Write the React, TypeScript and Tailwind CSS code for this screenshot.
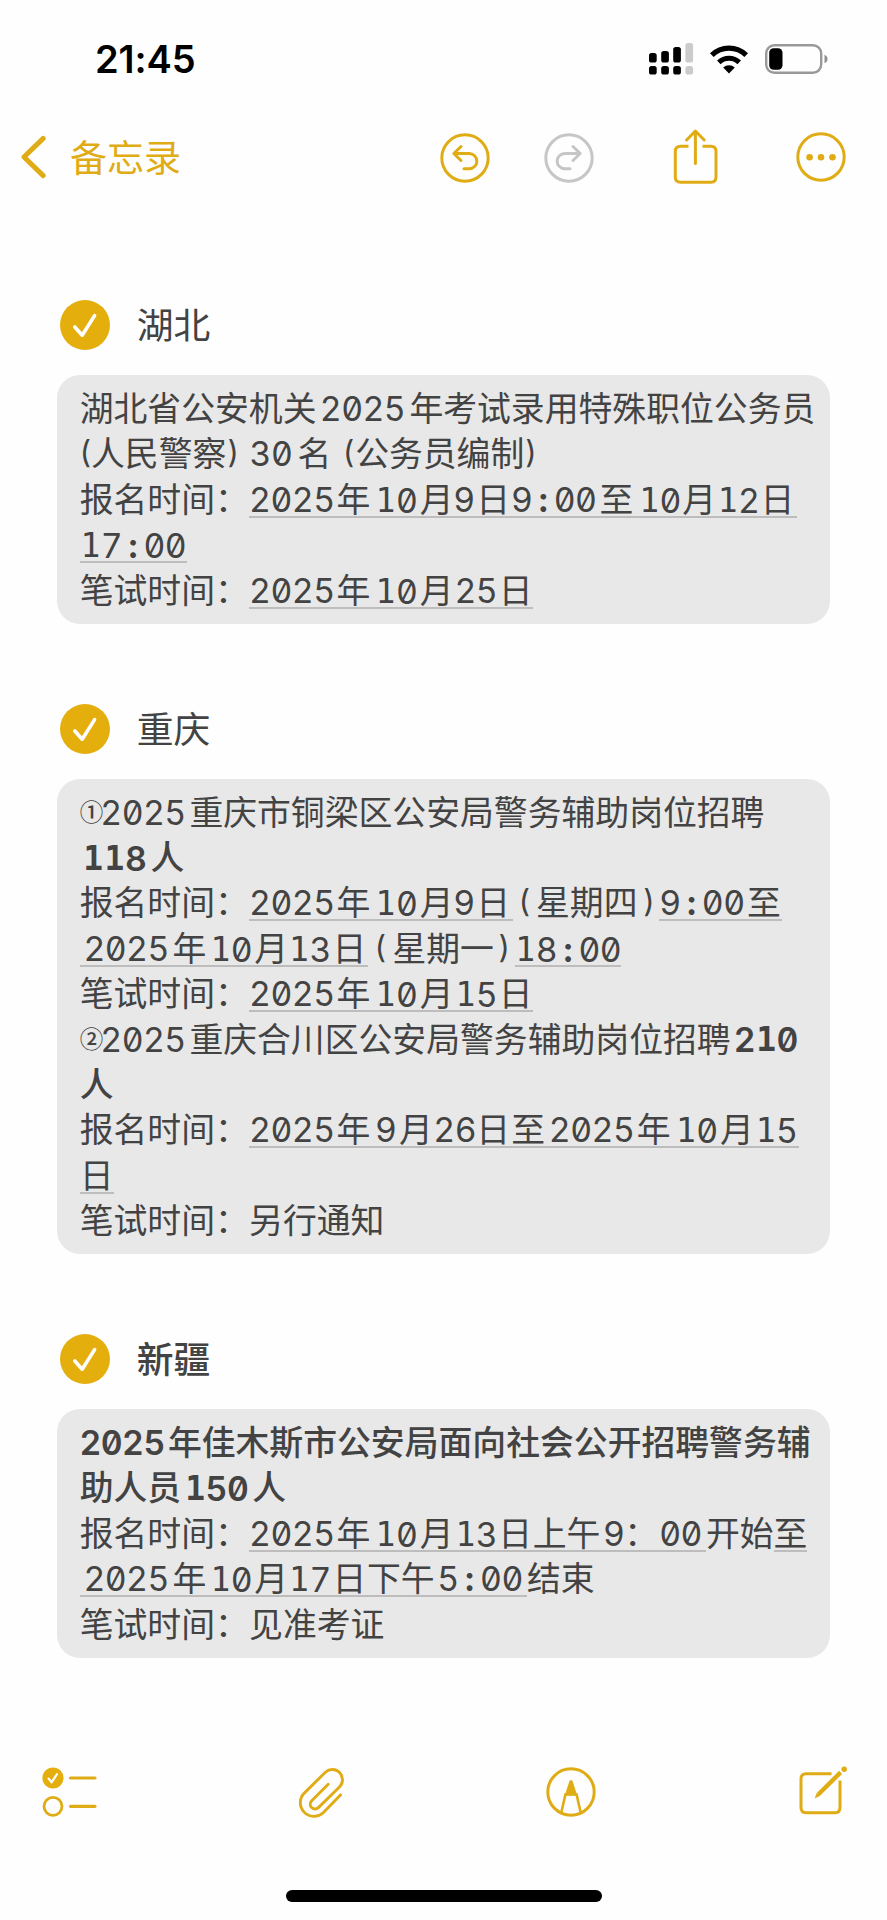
import clsx from 'clsx'

type Mark = '' | 'u' | 'b'

// text, left offset in the line (px), u = detected date underline, b = bold
type Run = [string, number, Mark?]

interface NoteLine {
  runs: Run[]
  end: number
}

interface NoteSection {
  title: string
  bold?: boolean
  lines: NoteLine[]
}

const APPLY: Run = ['报名时间：', 0]
const EXAM: Run = ['笔试时间：', 0]

const sections: NoteSection[] = [
  {
    title: '湖北',
    lines: [
      { runs: [['湖北省公安机关', 0], ['2025', 240.4], ['年考试录用特殊职位公务员', 329.7]], end: 736 },
      {
        runs: [
          ['(', 0], ['人民警察', 11.3], [')', 147.5], ['', 159.5], ['30', 170.2], ['名', 217.8], ['(', 262.5],
          ['公务员编制', 275.5], [')', 445.7],
        ],
        end: 457,
      },
      {
        runs: [
          APPLY, ['2025', 169.7, 'u'], ['年', 256.8, 'u'], ['10', 295.2, 'u'], ['月', 340.2, 'u'], ['9', 373.9, 'u'],
          ['日', 396.5, 'u'], ['9:00', 431.6, 'u'], ['至', 519.8, 'u'], ['10', 558.8, 'u'], ['月', 602.7, 'u'],
          ['12', 637.4, 'u'], ['日', 681, 'u'],
        ],
        end: 717.8,
      },
      { runs: [['17:00', 0, 'u']], end: 107 },
      {
        runs: [EXAM, ['2025', 169.7, 'u'], ['年', 256.8, 'u'], ['10', 295.2, 'u'], ['月', 340.2, 'u'], ['25', 375, 'u'], ['日', 419, 'u']],
        end: 453.6,
      },
    ],
  },
  {
    title: '重庆',
    lines: [
      { runs: [['①', 0], ['2025', 20.9], ['重庆市铜梁区公安局警务辅助岗位招聘', 109.7]], end: 686 },
      { runs: [['118', 2.8, 'b'], ['人', 70.7, 'b']], end: 105 },
      {
        runs: [
          APPLY, ['2025', 169.7, 'u'], ['年', 256.8, 'u'], ['10', 295.2, 'u'], ['月', 340.2, 'u'], ['9', 373.9, 'u'],
          ['日', 396.5, 'u'], ['(', 433.3], ['星期四', 456.4], [')', 558.8], ['9:00', 579.8, 'u'], ['至', 667.4, 'u'],
        ],
        end: 701.9,
      },
      {
        runs: [
          ['', 0, 'u'], ['2025', 4, 'u'], ['年', 92.8, 'u'], ['10', 130, 'u'], ['月', 174.5, 'u'], ['13', 208.7, 'u'],
          ['日', 252.8, 'u'], ['(', 288.5], ['星期一', 312.8], [')', 414], ['18:00', 435, 'u'],
        ],
        end: 541.3,
      },
      {
        runs: [EXAM, ['2025', 169.7, 'u'], ['年', 256.8, 'u'], ['10', 295.2, 'u'], ['月', 340.2, 'u'], ['15', 375, 'u'], ['日', 419, 'u']],
        end: 453.6,
      },
      { runs: [['②', 0], ['2025', 20.9], ['重庆合川区公安局警务辅助岗位招聘', 109.7], ['210', 654.4, 'b']], end: 719 },
      { runs: [['人', 0, 'b']], end: 34 },
      {
        runs: [
          APPLY, ['2025', 169.7, 'u'], ['年', 256.8, 'u'], ['9', 295.7, 'u'], ['月', 319.3, 'u'], ['26', 354, 'u'],
          ['日', 396.5, 'u'], ['至', 431.6, 'u'], ['2025', 469.5, 'u'], ['年', 557.1, 'u'], ['10', 595.6, 'u'],
          ['月', 640.4, 'u'], ['15', 675.3, 'u'],
        ],
        end: 719.5,
      },
      { runs: [['日', 0, 'u']], end: 34 },
      { runs: [EXAM, ['另行通知', 169.4]], end: 306 },
    ],
  },
  {
    title: '新疆',
    bold: true,
    lines: [
      { runs: [['2025', 0, 'b'], ['年佳木斯市公安局面向社会公开招聘警务辅', 88.2, 'b']], end: 732 },
      { runs: [['助人员', 0, 'b'], ['150', 104.8, 'b'], ['人', 172.5, 'b']], end: 207 },
      {
        runs: [
          APPLY, ['2025', 169.7, 'u'], ['年', 256.8, 'u'], ['10', 295.2, 'u'], ['月', 340.2, 'u'], ['13', 375, 'u'],
          ['日', 418.6, 'u'], ['上午', 453, 'u'], ['9', 523.7, 'u'], ['：', 544.7, 'u'], ['00', 579.8, 'u'],
          ['开始', 626.4], ['至', 694, 'u'],
        ],
        end: 727.5,
      },
      {
        runs: [
          ['', 0, 'u'], ['2025', 4, 'u'], ['年', 92.8, 'u'], ['10', 130, 'u'], ['月', 174.5, 'u'], ['17', 208.7, 'u'],
          ['日', 252.8, 'u'], ['下午', 287.3, 'u'], ['5:00', 358, 'u'], ['结束', 447.4],
        ],
        end: 516,
      },
      { runs: [EXAM, ['见准考证', 169.4]], end: 306 },
    ],
  },
]

function RunText({ text, bold }: { text: string; bold: boolean }) {
  if (/^[\d:]+$/.test(text)) {
    // digits sit in fixed-width cells
    return (
      <span className="inline-flex">
        {text.split('').map((ch, i) => (
          <span
            key={i}
            className={clsx(
              'flex w-[21.35px] justify-center',
              ch === '1'
                ? "font-['DejaVu_Sans_Mono',monospace] text-[33px]"
                : "font-['Inter',sans-serif] text-[33.8px] [font-feature-settings:'zero','tnum']",
              bold ? 'font-semibold' : ch === ':' ? 'font-bold' : 'font-normal',
            )}
          >
            {ch}
          </span>
        ))}
      </span>
    )
  }
  if (text === '(' || text === ')') {
    return <span className="block text-center font-['Inter',sans-serif] text-[31px] font-normal">{text}</span>
  }
  if (text === '①' || text === '②') {
    return <span className="block text-[23.5px] font-medium">{text}</span>
  }
  return <span className={bold ? 'font-medium' : 'font-normal'}>{text}</span>
}

function Line({ line }: { line: NoteLine }) {
  return (
    <div className="flex h-[45.4px]">
      {line.runs[0][1] > 0 && <span style={{ width: line.runs[0][1] }} />}
      {line.runs.map(([text, x, mark], i) => {
        const next = i + 1 < line.runs.length ? line.runs[i + 1][1] : line.end
        return (
          <span
            key={i}
            style={{ width: next - x }}
            className={clsx(
              'h-[41px] shrink-0 border-b-2 leading-[42.4px] whitespace-nowrap',
              mark === 'u' ? 'border-[#bdbdbd]' : 'border-transparent',
            )}
          >
            <RunText text={text} bold={mark === 'b'} />
          </span>
        )
      })}
    </div>
  )
}

function Section({ section }: { section: NoteSection }) {
  return (
    <section>
      <div className="flex h-[50px] items-center gap-[26.8px] pl-[3px]">
        <svg className="size-[50px]" viewBox="0 0 50 50" fill="none">
          <circle cx="25" cy="25" r="25" fill="#e4ae0c" />
          <path d="M14.8 27L22.2 35.2L34.6 15.6" stroke="#fff" strokeWidth="3.6" strokeLinecap="round" strokeLinejoin="round" />
        </svg>
        <h2 className={clsx('mb-[4px] text-[36.8px] leading-[50px]', section.bold ? 'font-medium' : 'font-normal')}>
          {section.title}
        </h2>
      </div>
      <div className="mt-[25px] rounded-[23px] bg-[#e8e8e8] pt-[11px] pb-[10.6px] pl-[22.7px] text-[33.84px]">
        {section.lines.map((line, i) => (
          <Line key={i} line={line} />
        ))}
      </div>
    </section>
  )
}

function StatusBar() {
  return (
    <div className="flex h-[118px] items-center justify-between pr-[59.5px] pl-[95px]">
      <span className="font-['Inter',sans-serif] text-[38px] leading-none font-semibold tracking-[-0.1px] text-black">21:45</span>
      <div className="flex items-center">
        <svg className="h-[32px] w-[45px]" viewBox="0 0 45 32">
          <rect x="0" y="10" width="7.7" height="9.5" rx="2.6" />
          <rect x="12.2" y="8" width="7.7" height="11.5" rx="2.6" />
          <rect x="24.2" y="4" width="7.7" height="15.5" rx="2.6" />
          <rect x="36.4" y="0" width="7.7" height="19.5" rx="2.6" fill="#cbcbcb" />
          <rect x="0" y="23" width="7.7" height="8.5" rx="2.6" />
          <rect x="12.2" y="23" width="7.7" height="8.5" rx="2.6" />
          <rect x="24.2" y="23" width="7.7" height="8.5" rx="2.6" />
          <rect x="36.4" y="23" width="7.7" height="8.5" rx="2.6" fill="#cbcbcb" />
        </svg>
        <svg className="ml-[16px] h-[29px] w-[38px]" viewBox="0 0 38 29" fill="none" stroke="#000">
          <path d="M1.8 10.2A24.5 24.5 0 0 1 36.2 10.2" strokeWidth="5.2" />
          <path d="M8.8 17.4A14.6 14.6 0 0 1 29.2 17.4" strokeWidth="5" />
          <path d="M19 28.4L13.2 22.6A8.2 8.2 0 0 1 24.8 22.6Z" fill="#000" stroke="none" />
        </svg>
        <svg className="ml-[17px] h-[30px] w-[63px]" viewBox="0 0 63 30">
          <rect x="1.2" y="1.2" width="55" height="27.6" rx="8.2" fill="none" stroke="#999" strokeWidth="2.4" />
          <rect x="4.2" y="4.2" width="13.3" height="21.6" rx="4.5" />
          <path d="M59.5 10.8Q62.5 12 62.5 15T59.5 19.2Z" fill="#8f8f8f" />
        </svg>
      </div>
    </div>
  )
}

function NavBar() {
  return (
    <div className="flex h-[78px] items-center pl-[20px] text-[#e0ac15]">
      <svg className="h-[44px] w-[27px]" viewBox="0 0 27 44" fill="none" stroke="currentColor" strokeWidth="5" strokeLinecap="round" strokeLinejoin="round">
        <path d="M23.2 3.4L4 22L23.2 40.6" />
      </svg>
      <span className="mb-[3px] ml-[23px] w-[370px] text-[37px] leading-[50px]">备忘录</span>
      <svg className="mt-px size-[50px]" viewBox="0 0 50 50" fill="none" stroke="currentColor" strokeWidth="3" strokeLinecap="round" strokeLinejoin="round">
        <circle cx="25" cy="25" r="23.2" />
        <path d="M21 13.5L13.8 20.5L21 27.5M14 20.5H29.2A7.6 7.6 0 0 1 29.2 35.8H24" />
      </svg>
      <svg className="mt-px ml-[54px] size-[50px] text-[#c6c6c6]" viewBox="0 0 50 50" fill="none" stroke="currentColor" strokeWidth="3" strokeLinecap="round" strokeLinejoin="round">
        <circle cx="25" cy="25" r="23.2" />
        <path d="M29 13.5L36.2 20.5L29 27.5M36 20.5H20.8A7.6 7.6 0 0 0 20.8 35.8H26" />
      </svg>
      <svg className="mb-[1px] ml-[79.3px] h-[56px] w-[46px]" viewBox="0 0 46 56" fill="none" stroke="currentColor" strokeWidth="3" strokeLinecap="round" strokeLinejoin="round">
        <path d="M15.5 17.3H7.5Q2.3 17.3 2.3 22.5V48Q2.3 53.2 7.5 53.2H38Q43 53.2 43 48V22.5Q43 17.3 38 17.3H29.5" strokeLinecap="butt" />
        <path d="M22.4 34.5V2.5M13.6 11L22.4 2L31.2 11" />
      </svg>
      <svg className="mb-px ml-[76.8px] size-[50px]" viewBox="0 0 50 50">
        <circle cx="25" cy="25" r="23.2" fill="none" stroke="currentColor" strokeWidth="3" />
        <circle cx="13.6" cy="25.2" r="3.3" fill="currentColor" />
        <circle cx="25" cy="25.2" r="3.3" fill="currentColor" />
        <circle cx="36.5" cy="25.2" r="3.3" fill="currentColor" />
      </svg>
    </div>
  )
}

function Toolbar() {
  return (
    <div className="flex h-[54px] items-center pl-[42px] text-[#e0ac15]">
      <svg className="h-[54px] w-[56px]" viewBox="0 0 56 54" fill="none" stroke="currentColor" strokeWidth="3.2" strokeLinecap="round">
        <circle cx="11" cy="13" r="10.6" fill="#e4ae0c" stroke="none" />
        <path d="M6.6 13.6L9.6 17.3L15 9.2" stroke="#fff" strokeWidth="2.2" strokeLinejoin="round" />
        <circle cx="11" cy="41.3" r="9" strokeWidth="2.8" />
        <path d="M28.5 13H53M28.5 41.3H53" />
      </svg>
      <svg className="ml-[199.5px] h-[54px] w-[48px]" viewBox="0 0 48 54" fill="none" stroke="currentColor" strokeWidth="2.9" strokeLinecap="round">
        <path d="M30.2 19.2L13.7 35.8A4.7 4.7 0 0 0 20.4 42.6L41.2 22.2A10 10 0 0 0 27.4 7.2L6.8 27.6A13 13 0 0 0 25.2 47.8L42.5 29.9" />
      </svg>
      <svg className="ml-[200px] size-[50px]" viewBox="0 0 50 50" fill="none" stroke="currentColor" strokeWidth="3">
        <circle cx="25" cy="25" r="23.2" />
        <path d="M25 13Q26.3 13 26.7 14.5L31.2 28.2H18.8L23.3 14.5Q23.7 13 25 13Z" fill="currentColor" stroke="none" />
        <path d="M15.4 45.2L19.4 27.5H30.6L34.6 45.2" strokeWidth="2.6" />
      </svg>
      <svg className="ml-[202.5px] h-[54px] w-[50px]" viewBox="0 0 50 54" fill="none" stroke="currentColor" strokeWidth="3">
        <path d="M33.5 8.7H8Q3 8.7 3 13.7V42.5Q3 47.7 8 47.7H37Q42 47.7 42 42.5V15.5" />
        <path d="M42.6 7.4L20.5 29.2" strokeWidth="4.4" />
        <path d="M19 27.6L22.2 30.8L16.6 33.4Z" fill="currentColor" stroke="none" />
        <circle cx="46.2" cy="4.2" r="2.7" fill="currentColor" stroke="none" />
      </svg>
    </div>
  )
}

export default function App() {
  return (
    <div className="flex h-[1920px] w-[887px] flex-col overflow-hidden bg-[#fefefe] font-['Noto_Sans_CJK_SC',sans-serif] text-[#434343]">
      <StatusBar />
      <NavBar />
      <main className="flex h-[1569px] flex-col gap-[80px] px-[57px] pt-[104px]">
        {sections.map((section) => (
          <Section key={section.title} section={section} />
        ))}
      </main>
      <Toolbar />
      <div className="mx-auto mt-[71px] h-[11.5px] w-[316px] rounded-full bg-black" />
    </div>
  )
}
